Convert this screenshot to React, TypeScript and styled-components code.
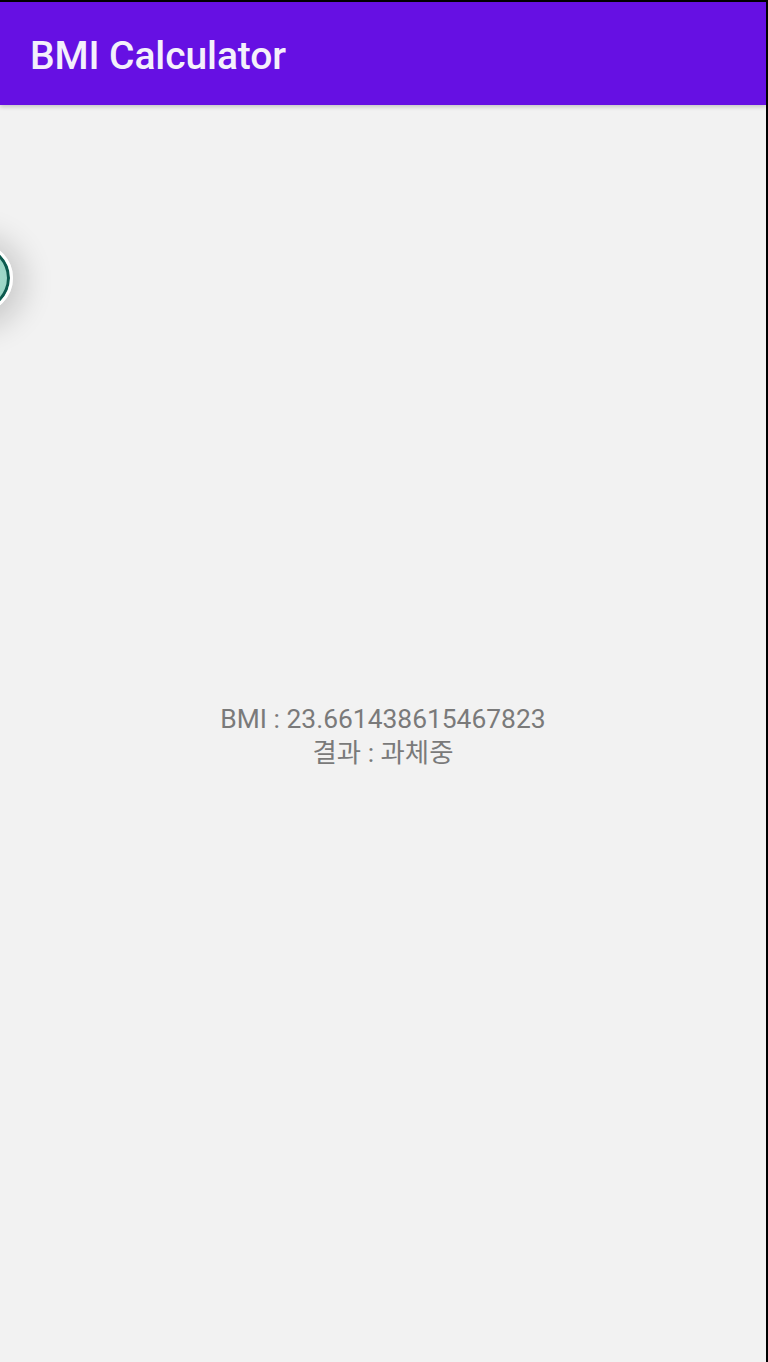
import React from "react";
import styled, { createGlobalStyle } from "styled-components";

const GlobalStyle = createGlobalStyle`
  html, body {
    margin: 0;
    padding: 0;
    background: #000;
  }
  body {
    font-family: Roboto, "Noto Sans CJK KR", sans-serif;
  }
`;

const Frame = styled.div`
  width: 766px;
  height: 1360px;
  margin-top: 2px;
  background: #f2f2f2;
  display: flex;
  flex-direction: column;
  position: relative;
  overflow: hidden;
`;

const Toolbar = styled.header`
  height: 103px;
  flex: none;
  background: #6610e3;
  display: flex;
  align-items: center;
  padding-left: 30px;
  box-shadow: 0 2px 4px rgba(0, 0, 0, 0.18);
  position: relative;
  z-index: 1;
`;

const Title = styled.h1`
  margin: 4px 0 0;
  color: #f4f0fb;
  font-family: Roboto, sans-serif;
  font-weight: 500;
  font-size: 39px;
  letter-spacing: -0.1px;
`;

const Content = styled.main`
  flex: 1;
  display: flex;
  flex-direction: column;
  align-items: center;
  justify-content: center;
  padding-top: 4px;
`;

const ResultLine = styled.div`
  color: #7a7a7a;
  font-size: 26.4px;
  line-height: 34px;
  font-family: Roboto, "Noto Sans CJK KR", sans-serif;
`;

const Thumb = styled.div`
  position: absolute;
  left: -57px;
  top: 241px;
  width: 64px;
  height: 64px;
  border-radius: 50%;
  background: radial-gradient(circle at 70% 50%, #a6dccd 0%, #8ccfbd 70%);
  border: 3px solid #fff;
  box-shadow: 0 0 0 3px #0c5a4e inset, 0 4px 30px 12px rgba(0, 0, 0, 0.16);
`;

export default function App() {
  const bmi = 23.661438615467823;
  return (
    <>
      <GlobalStyle />
      <Frame>
        <Toolbar>
          <Title>BMI Calculator</Title>
        </Toolbar>
        <Thumb />
        <Content>
          <ResultLine>BMI : {bmi}</ResultLine>
          <ResultLine>결과 : 과체중</ResultLine>
        </Content>
      </Frame>
    </>
  );
}
